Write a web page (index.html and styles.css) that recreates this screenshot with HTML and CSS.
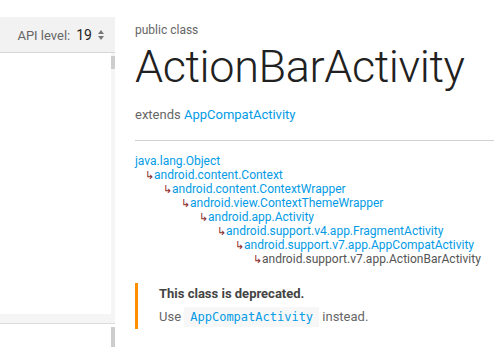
FILE: index.html
```html
<!DOCTYPE html>
<html>

<head>
    <meta name="viewport" content="width=device-width, initial-scale=1.0">
    <title>ActionBarActivity</title>
    <link rel="stylesheet" href="styles.css">
</head>

<body>
    <div class="page">
        <nav class="sidenav">
            <div class="api-bar">
                <span class="api-label">API level:</span>
                <span class="api-value">19</span>
                <svg class="api-arrows" width="6" height="10" viewBox="0 0 6 10">
                    <path d="M0 4 L3 0 L6 4 Z M0 6 L3 10 L6 6 Z" fill="#777"/>
                </svg>
            </div>
            <div class="nav-list">
                <div class="nav-items"></div>
                <div class="track"><div class="thumb"></div></div>
            </div>
            <div class="nav-foot"></div>
            <div class="nav-next">
                <div class="nav-items"></div>
                <div class="track"><div class="thumb low"></div></div>
            </div>
        </nav>

        <main class="content">
            <div class="kind">public class</div>
            <h1>ActionBarActivity</h1>
            <div class="extends">extends <a href="#">AppCompatActivity</a></div>
            <hr>

            <ul class="inherit">
                <li class="lvl0"><a href="#">java.lang.Object</a></li>
                <li class="lvl1"><span class="arrow">&#8627;</span><a href="#">android.content.Context</a></li>
                <li class="lvl2"><span class="arrow">&#8627;</span><a href="#">android.content.ContextWrapper</a></li>
                <li class="lvl3"><span class="arrow">&#8627;</span><a href="#">android.view.ContextThemeWrapper</a></li>
                <li class="lvl4"><span class="arrow">&#8627;</span><a href="#">android.app.Activity</a></li>
                <li class="lvl5"><span class="arrow">&#8627;</span><a href="#">android.support.v4.app.FragmentActivity</a></li>
                <li class="lvl6"><span class="arrow">&#8627;</span><a href="#">android.support.v7.app.AppCompatActivity</a></li>
                <li class="lvl7"><span class="arrow">&#8627;</span><span class="current">android.support.v7.app.ActionBarActivity</span></li>
            </ul>

            <div class="deprecated">
                <p class="dep-title">This class is deprecated.</p>
                <p class="dep-text">Use <code>AppCompatActivity</code> instead.</p>
            </div>
        </main>
    </div>
</body>

</html>
```

FILE: styles.css
```css
* {
    box-sizing: border-box;
}

body {
    margin: 0;
    font-family: Roboto, "Liberation Sans", sans-serif;
    color: #333;
    background: #fff;
    overflow: hidden;
}

a {
    color: #039be5;
    text-decoration: none;
}

.page {
    display: flex;
    height: 347px;
}

/* left navigation */
.sidenav {
    width: 115px;
    flex-shrink: 0;
    padding-top: 17px;
    display: flex;
    flex-direction: column;
}

.api-bar {
    height: 37px;
    background: #f2f2f2;
    border-bottom: 1px solid #d6d6d6;
    display: flex;
    align-items: center;
    justify-content: flex-end;
    padding: 2px 11px 0 0;
    font-size: 13px;
}

.api-label {
    color: #666;
}

.api-value {
    color: #222;
    font-size: 14px;
    margin-left: 6px;
}

.api-arrows {
    margin-left: 6px;
}

.nav-list {
    height: 270px;
    display: flex;
}

.nav-items {
    flex: 1;
}

.track {
    width: 4px;
    background: #f5f5f5;
}

.thumb {
    height: 13px;
    margin-top: 3px;
    background: #cdcdcd;
}

.thumb.low {
    margin-top: 3px;
    height: 20px;
}

.nav-foot {
    height: 10px;
    background: #f5f5f5;
    border-bottom: 1px solid #dcdcdc;
}

.nav-next {
    flex: 1;
    display: flex;
}

.nav-next .track {
    background: #fff;
}

/* main content */
.content {
    flex: 1;
    padding: 22px 0 0 20px;
    min-width: 0;
}

.kind {
    font-size: 12px;
    color: #666;
    line-height: 16px;
}

h1 {
    margin: 0;
    font-size: 45px;
    font-weight: 300;
    color: #212121;
    line-height: 58px;
    letter-spacing: -0.4px;
}

.extends {
    margin-top: 10px;
    font-size: 13px;
    color: #666;
    line-height: 18px;
}

hr {
    margin: 16px 0 13px;
    border: none;
    border-top: 1px solid #d0d0d0;
}

.inherit {
    list-style: none;
    margin: 0;
    padding: 0;
    font-size: 12px;
}

.inherit li {
    height: 14px;
    line-height: 14px;
    white-space: nowrap;
}

.arrow {
    color: #8b2a2a;
    font-size: 11px;
    line-height: 14px;
}

.current {
    color: #555;
}

.lvl1 { padding-left: 10px; }
.lvl2 { padding-left: 28px; }
.lvl3 { padding-left: 46px; }
.lvl4 { padding-left: 64px; }
.lvl5 { padding-left: 82px; }
.lvl6 { padding-left: 100px; }
.lvl7 { padding-left: 118px; }

.deprecated {
    margin-top: 17px;
    border-left: 3px solid #ff8f00;
    padding: 2px 0 1px 21px;
    width: 330px;
}

.deprecated p {
    margin: 0;
    font-size: 13px;
}

.dep-title {
    font-weight: bold;
    color: #444;
    line-height: 18px;
}

.dep-text {
    margin-top: 3px !important;
    color: #666;
    line-height: 22px;
}

code {
    font-family: "DejaVu Sans Mono", "Liberation Mono", monospace;
    font-size: 12px;
    color: #039be5;
    background: #f7f7f7;
    padding: 3px 6px;
}
```
